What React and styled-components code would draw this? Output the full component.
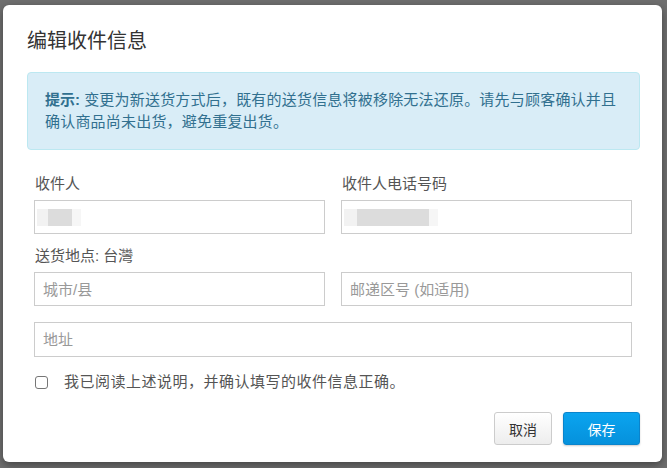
import React, { useState } from 'react';
import styled, { createGlobalStyle } from 'styled-components';

const GlobalStyle = createGlobalStyle`
  html, body {
    margin: 0;
    padding: 0;
    background: #6f6f6f;
  }
  body {
    font-family: 'Liberation Sans', 'Noto Sans CJK SC', sans-serif;
  }
`;

const App = () => {
  const [agreed, setAgreed] = useState(false);

  return (
    <>
      <GlobalStyle />
      <Backdrop>
        <Modal>
          <Title>编辑收件信息</Title>
          <Alert>
            <strong>提示:</strong>{' '}
            <span>变更为新送货方式后，既有的送货信息将被移除无法还原。请先与顾客确认并且确认商品尚未出货，避免重复出货。</span>
          </Alert>

          <Form>
            <Row>
              <Field>
                <Label>收件人</Label>
                <InputBox>
                  <Blur $outer={44} $inner={24} $offset={11} />
                </InputBox>
              </Field>
              <Field>
                <Label>收件人电话号码</Label>
                <InputBox>
                  <Blur $outer={94} $inner={72} $offset={13} />
                </InputBox>
              </Field>
            </Row>

            <Field>
              <Label>送货地点: 台灣</Label>
              <Row>
                <Input placeholder="城市/县" />
                <Input placeholder="邮递区号 (如适用)" />
              </Row>
            </Field>

            <Input placeholder="地址" $spaced />

            <CheckRow>
              <Check
                type="checkbox"
                checked={agreed}
                onChange={(e) => setAgreed(e.target.checked)}
              />
              <span>我已阅读上述说明，并确认填写的收件信息正确。</span>
            </CheckRow>
          </Form>

          <Footer>
            <Button>取消</Button>
            <Button $primary>保存</Button>
          </Footer>
        </Modal>
      </Backdrop>
    </>
  );
};

const Backdrop = styled.div`
  width: 667px;
  height: 468px;
  box-sizing: border-box;
  padding: 5px 5px 0 3px;
  background: #6f6f6f;
  overflow: hidden;
`;

const Modal = styled.div`
  width: 659px;
  height: 457px;
  box-sizing: border-box;
  background: #fff;
  border-radius: 6px;
  box-shadow: 0 3px 9px rgba(0, 0, 0, 0.4);
  padding: 25px 22px 0 24px;
  display: flex;
  flex-direction: column;
`;

const Title = styled.h4`
  margin: 0;
  font-size: 20px;
  line-height: 22px;
  font-weight: normal;
  color: #333;
`;

const Alert = styled.div`
  margin-top: 20px;
  padding: 16px 18px 16px 17px;
  border: 1px solid #bce8f1;
  border-radius: 4px;
  background: #d9edf7;
  color: #31708f;
  font-size: 15px;
  line-height: 22px;

  strong {
    font-weight: bold;
  }

  span {
    letter-spacing: 0.2px;
  }
`;

const Form = styled.div`
  margin-top: 24px;
  padding: 0 8px 0 7px;
  display: flex;
  flex-direction: column;
  gap: 12px;
`;

const Row = styled.div`
  display: grid;
  grid-template-columns: 1fr 1fr;
  gap: 16px;
`;

const Field = styled.div`
  display: flex;
  flex-direction: column;
  gap: 6px;
`;

const Label = styled.label`
  font-size: 15px;
  line-height: 20px;
  color: #555;
  padding-left: 1px;
`;

const InputBox = styled.div`
  height: 34px;
  box-sizing: border-box;
  border: 1px solid #ccc;
  display: flex;
  align-items: center;
  padding-left: 2px;
`;

const Blur = styled.div`
  width: ${(p) => p.$outer}px;
  height: 17px;
  background: linear-gradient(
    to right,
    #f2f2f2 0,
    #f2f2f2 ${(p) => p.$offset}px,
    #dcdcdc ${(p) => p.$offset}px,
    #dcdcdc ${(p) => p.$offset + p.$inner}px,
    #f6f6f6 ${(p) => p.$offset + p.$inner}px
  );
`;

const Input = styled.input`
  height: ${(p) => (p.$spaced ? '35px' : '34px')};
  box-sizing: border-box;
  border: 1px solid #ccc;
  border-radius: 0;
  padding: 0 8px;
  font-family: inherit;
  font-size: 15px;
  color: #555;
  outline: none;
  margin-top: ${(p) => (p.$spaced ? '4px' : '0')};

  &::placeholder {
    color: #999;
  }
`;

const CheckRow = styled.label`
  display: flex;
  align-items: center;
  gap: 16px;
  margin-top: 3px;
  font-size: 15px;
  line-height: 20px;
  letter-spacing: 0.5px;
  color: #555;
  padding-left: 1px;
`;

const Check = styled.input`
  appearance: none;
  margin: 0;
  width: 13px;
  height: 13px;
  border: 1px solid #767676;
  border-radius: 3px;
  background: #fff;

  &:checked {
    background: #0a8ae0;
    border-color: #0a8ae0;
  }
`;

const Footer = styled.div`
  margin-top: 20px;
  display: flex;
  justify-content: flex-end;
  gap: 11px;
`;

const Button = styled.button`
  height: 33px;
  width: ${(p) => (p.$primary ? '77px' : '58px')};
  box-sizing: border-box;
  padding: 0;
  font-family: inherit;
  font-size: 14px;
  border-radius: 3px;
  cursor: pointer;
  border: 1px solid ${(p) => (p.$primary ? '#0a84cc' : '#ccc')};
  color: ${(p) => (p.$primary ? '#fff' : '#333')};
  background: ${(p) =>
    p.$primary
      ? 'linear-gradient(to bottom, #0ba4ef, #0591dc)'
      : 'linear-gradient(to bottom, #fff, #ededed)'};
  box-shadow: ${(p) => (p.$primary ? '0 1px 2px rgba(0,0,0,0.2)' : 'none')};
`;

export default App;
